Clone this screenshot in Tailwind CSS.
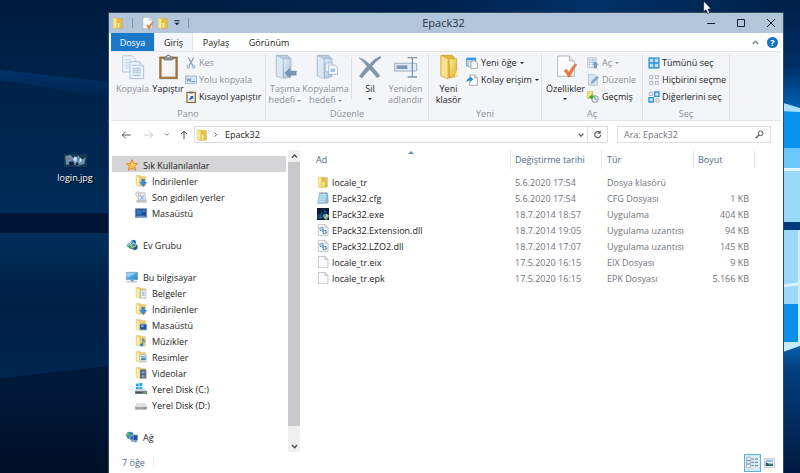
<!DOCTYPE html>
<html lang="tr">
<head>
<meta charset="utf-8">
<meta name="viewport" content="width=device-width, initial-scale=1">
<title>Epack32</title>
<script src="https://cdn.jsdelivr.net/npm/@tailwindcss/browser@4"></script>
</head>
<body class="relative flex h-screen flex-col overflow-hidden bg-[#001c40] pt-3 pr-4 pl-[108px] font-['Open_Sans','Noto_Sans',sans-serif] text-[9px] leading-[11px] text-[#1c1c20]">

<!-- Shared icons -->
<svg class="absolute size-0" aria-hidden="true">
  <defs>
    <linearGradient id="gold" x1="0" y1="0" x2="1" y2="1"><stop offset="0" stop-color="#fdeb90"/><stop offset="1" stop-color="#deb132"/></linearGradient>
    <linearGradient id="pale" x1="0" y1="0" x2="1" y2="1"><stop offset="0" stop-color="#e6eff8"/><stop offset="1" stop-color="#a9bfd5"/></linearGradient>
    <linearGradient id="sky" x1="0" y1="0" x2="1" y2="1"><stop offset="0" stop-color="#8fd6fb"/><stop offset="1" stop-color="#1b7fd0"/></linearGradient>
  </defs>
  <symbol id="folder" viewBox="0 0 36 36">
    <path d="M4 3h13l3 3v27l-8 2-8-3z" fill="url(#gold)" stroke="#d3ac45" stroke-width="1.5"/>
    <path d="M17 5h14v28l-12 1z" fill="#e6c14a" stroke="#cda239" stroke-width="1.5"/>
    <path d="M4 3l9 5v27l-9-4z" fill="#f9e98c"/><path d="M17 18h5v14h-5z" fill="#fff6bd"/>
  </symbol>
  <symbol id="navfolder" viewBox="0 0 36 36">
    <path d="M4 2h12l3 3h12v28H14l-10-3z" fill="#ebcb6c" stroke="#d3b052" stroke-width="1.5"/>
    <path d="M4 2l10 5v27L4 30z" fill="#faeda6" stroke="#e1c468"/>
  </symbol>
  <symbol id="down" viewBox="0 0 36 36"><use href="#navfolder"/><path d="M20 13h9v9h6L25 35 14 22h6z" fill="#2f8fe0" stroke="#1b68b3"/></symbol>
  <symbol id="docs" viewBox="0 0 36 36"><use href="#navfolder"/><path d="M16 9h17v24H16z" fill="#f1f5fa" stroke="#8c9aad" stroke-width="1.5"/><path d="M20 15h9M20 20h9M20 25h9" stroke="#7496bd" stroke-width="2"/></symbol>
  <symbol id="deskfolder" viewBox="0 0 36 36"><use href="#navfolder"/><path d="M15 16h20v16H15z" fill="#28549a" stroke="#6787b1" stroke-width="2"/><path d="M18 19h8v5h-8z" fill="#76b6ed"/></symbol>
  <symbol id="music" viewBox="0 0 36 36"><use href="#navfolder"/><path d="M22 7c1 7 11 7 9 19-1-6-3-8-6-9v12c-1 6-11 6-10 0 1-4 5-4 7-3z" fill="#258bd8"/></symbol>
  <symbol id="pics" viewBox="0 0 36 36"><use href="#navfolder"/><path d="M14 12h21v20H14z" fill="#eaf4fb" stroke="#a0b5c8" stroke-width="1.5"/><path d="M17 25l6-6 4 3 5-4v10H17z" fill="#4b8f99"/><path d="M17 15h15v4H17z" fill="#70b3e8"/></symbol>
  <symbol id="videos" viewBox="0 0 36 36"><use href="#navfolder"/><path d="M15 8h19v26H15z" fill="#444c56"/><path d="M20 11h9v9h-9zM20 23h9v9h-9z" fill="#68a3da"/><path d="M17 10v22M32 10v22" stroke="#e9edf0" stroke-width="2" stroke-dasharray="3 3"/></symbol>
  <symbol id="star" viewBox="0 0 36 36"><path d="M18 2l5 11 12 1-9 8 3 12-11-6-11 6 3-12-9-8 12-1z" fill="#ffbf43" stroke="#e07a22" stroke-width="2.5"/><path d="M18 8l3 8 7 1-9 4z" fill="#ffe69a"/></symbol>
  <symbol id="recent" viewBox="0 0 36 36"><path d="M11 5h19l2 25H9z" fill="#e5e9ed" stroke="#9da6b0" stroke-width="1.5"/><path d="M5 28h29v6H5z" fill="#c4cbd2" stroke="#8d969f"/><path d="M16 14l6 5 5-6M16 26l5-6 6 6" fill="none" stroke="#4f91cb" stroke-width="2.5"/><circle cx="9" cy="9" r="7" fill="#f6f7f8" stroke="#a2a9b1" stroke-width="2"/><path d="M9 5v5h4" fill="none" stroke="#6f7780" stroke-width="1.5"/></symbol>
  <symbol id="desktop" viewBox="0 0 36 36"><path d="M1 5h34v26H1z" fill="#1d4c93" stroke="#7a8ba1" stroke-width="2"/><path d="M4 9h16v13H4z" fill="#2f78c7"/><path d="M22 8h9v2h-9zM22 13h9v2h-9zM4 26h28v3H4z" fill="#83addd"/></symbol>
  <symbol id="homegroup" viewBox="0 0 36 36"><circle cx="9" cy="19" r="7" fill="#62b1e8"/><circle cx="22" cy="10" r="8" fill="#338fc9"/><circle cx="26" cy="24" r="9" fill="#2c65ad"/><circle cx="16" cy="22" r="8" fill="#48a34a"/><path d="M2 15c6 5 12 2 14-9M14 18l10-7 5 11-12 3z" stroke="#eaf7ee" stroke-width="2" fill="none"/><path d="M21 3l9 5-3 5zM24 27l10-5-4 9z" fill="#1d438c"/></symbol>
  <symbol id="pc" viewBox="0 0 36 36"><path d="M1 4h34v22H1z" fill="url(#sky)" stroke="#7697b3" stroke-width="2"/><path d="M4 7h26L4 19z" fill="#b4e8ff" opacity=".6"/><path d="M14 27h9v4h-9z" fill="#8596a7"/><path d="M2 31h32v3H2z" fill="#9fb6ca"/></symbol>
  <symbol id="diskc" viewBox="0 0 36 36"><path d="M3 2l8-1v8H3zM13 1l9-1v9h-9zM3 11h8v7H3zM13 11h9v8h-9z" fill="#21a4e8"/><path d="M4 19h28l4 6H0z" fill="#ccd2d6"/><path d="M0 24h36v9H0z" fill="#6f7d85"/><path d="M3 27h19v3H3z" fill="#444f57"/><path d="M27 26h6v4h-6z" fill="#59c94d"/></symbol>
  <symbol id="diskd" viewBox="0 0 36 36"><path d="M5 14h26l5 10v5q0 3-3 3H3q-3 0-3-3v-5z" fill="#dfe1e3" stroke="#a5a8ab"/><path d="M1 24h34v5q0 2-2 2H3q-2 0-2-2z" fill="#8b8f93"/><path d="M5 26h21v2H5z" fill="#d4d6d8"/></symbol>
  <symbol id="network" viewBox="0 0 36 36"><circle cx="12" cy="13" r="11" fill="#2e83d0"/><path d="M4 6c7-4 10 0 7 5s-7 3-8 8c-3-5-2-9 1-13zM13 15l7-3v8l-6 3z" fill="#59b851"/><path d="M12 14h15v13H12z" fill="#2d69b7" stroke="#b9cbdf" stroke-width="2"/><path d="M22 12h13v16H22z" fill="#274d99" stroke="#8da8ca" stroke-width="2"/><path d="M25 29h7v5h-7zM16 28h6v4h-6z" fill="#5a79a3"/></symbol>
  <symbol id="cfg" viewBox="0 0 36 36"><path d="M8 3h24l2 28-4 3H2z" fill="#86bddb" stroke="#7195ae" stroke-width="1.5"/><path d="M9 5h19l-4 26H4z" fill="#c5e8f5"/><path d="M9 10h18M8 15h18M7 20h18M6 25h18" stroke="#73aecd" stroke-width="1.5"/><path d="M8 3h23" stroke="#5f6f7b" stroke-width="3" stroke-dasharray="2 2"/></symbol>
  <symbol id="exe" viewBox="0 0 36 36"><path d="M0 0h36v36H0z" fill="#0b1d35"/><path d="M0 24l5-10 4 7 5-14 3 12 8-16 4 14v11H0z" fill="#123d68"/><path d="M3 29h14M8 22l4 3M22 8l4 4" stroke="#3ea2d8" stroke-width="2"/><path d="M27 18l8 3c0 7-3 11-8 14-5-3-8-7-8-14z" fill="#eed04c"/><path d="M27 18v8h-8c0-2 0-3 0-5zM27 26h8c-1 4-4 7-8 9z" fill="#4b93dc"/></symbol>
  <symbol id="page" viewBox="0 0 36 36"><path d="M4 1h20l9 9v25H4z" fill="#fcfcfc" stroke="#a7a9ac" stroke-width="2"/><path d="M24 1v9h9" fill="#e6e7e8" stroke="#a7a9ac" stroke-width="2"/></symbol>
  <symbol id="dll" viewBox="0 0 36 36"><use href="#page"/><circle cx="14" cy="15" r="5" fill="#d6eafb" stroke="#4a84bd" stroke-width="4" stroke-dasharray="3 1.5"/><circle cx="23" cy="24" r="5" fill="#d6eafb" stroke="#3a6fa5" stroke-width="4" stroke-dasharray="3 1.5"/></symbol>
  <symbol id="props" viewBox="0 0 72 72"><path d="M11 3h35l15 15v46H11z" fill="#fdfdfe" stroke="#a3a7af" stroke-width="2.5"/><path d="M46 3v15h15" fill="#e4e7eb" stroke="#a3a7af" stroke-width="2.5"/><path d="M29 48l8-6 8 9c5-10 10-18 20-25l4 4C59 41 54 51 49 66h-6c-4-8-8-13-14-18z" fill="#ea7b49" stroke="#c9602f"/></symbol>
  <symbol id="bigfolder" viewBox="0 0 72 78"><path d="M12 4h34l5 6v54l-12 8-27-6z" fill="#e3b936" stroke="#bd922b" stroke-width="2"/><path d="M36 14h23v53l-21 4z" fill="url(#gold)" stroke="#c7992d" stroke-width="2"/><path d="M12 4l21 11v60L12 66z" fill="#fae38b" stroke="#d0a63c" stroke-width="2"/><path d="M59 50l6 6-4 10-8 2z" fill="#fff0a5"/></symbol>
  <symbol id="greyfolder" viewBox="0 0 72 78"><path d="M10 4h34l6 6v54l-12 8-28-6z" fill="#b7cadd" stroke="#93a9bf" stroke-width="2"/><path d="M30 14h24v54l-22 5z" fill="url(#pale)" stroke="#9ab0c5" stroke-width="2"/><path d="M10 4l20 11v59L10 66z" fill="#dce8f3" stroke="#a7bacd" stroke-width="2"/></symbol>
  <symbol id="caret" viewBox="0 0 12 6"><path d="M0 0h12L6 6z" fill="currentColor"/></symbol>
</svg>

<!-- Desktop wallpaper -->
<svg class="absolute inset-0 h-full w-full" viewBox="0 0 800 473" preserveAspectRatio="none" aria-hidden="true">
  <defs>
    <linearGradient id="wl" x1="0" y1="0" x2="0" y2="1"><stop offset="0" stop-color="#001b3e"/><stop offset=".2" stop-color="#00234c"/><stop offset=".45" stop-color="#002a58"/><stop offset="1" stop-color="#002a58"/></linearGradient>
    <linearGradient id="ws" x1="0" y1="0" x2="0" y2="1"><stop offset="0" stop-color="#003c78" stop-opacity=".7"/><stop offset="1" stop-color="#003c78" stop-opacity="0"/></linearGradient>
    <linearGradient id="wm" x1="0" y1="0" x2="0" y2="1"><stop offset="0" stop-color="#002e5c"/><stop offset=".5" stop-color="#001f45"/><stop offset="1" stop-color="#002650"/></linearGradient>
    <linearGradient id="wb" x1="0" y1="0" x2="0" y2="1"><stop offset="0" stop-color="#001a3b"/><stop offset="1" stop-color="#001028"/></linearGradient>
    <linearGradient id="wt" x1="0" y1="0" x2="1" y2="0"><stop offset="0" stop-color="#001b3e"/><stop offset=".5" stop-color="#002352"/><stop offset=".7" stop-color="#003266"/><stop offset="1" stop-color="#001f49"/></linearGradient>
    <linearGradient id="wr" x1="0" y1="0" x2="0" y2="1"><stop offset="0" stop-color="#001f49"/><stop offset=".6" stop-color="#002f66"/><stop offset="1" stop-color="#0068bd"/></linearGradient>
    <linearGradient id="wd" x1="0" y1="0" x2="0" y2="1"><stop offset="0" stop-color="#0a66b4"/><stop offset=".2" stop-color="#033f80"/><stop offset="1" stop-color="#001a41"/></linearGradient>
  </defs>
  <path d="M0 0h800v473H0z" fill="url(#wl)"/>
  <path d="M0 70l108 12v16L0 80z" fill="url(#ws)"/>
  <path d="M0 213h108v20H0z" fill="#001535"/>
  <path d="M0 233h108v145H0z" fill="url(#wm)"/>
  <path d="M0 378l108-12v107H0z" fill="url(#wb)"/>
  <path d="M108 0h692v14H108z" fill="url(#wt)"/>
  <path d="M780 0h20v112h-20z" fill="url(#wr)"/>
  <path d="M780 108h20v40h-20z" fill="#0794ef"/>
  <path d="M780 102l20 6v4l-20-1z" fill="#a9e0ff"/>
  <path d="M780 148h20v75h-20z" fill="#6ac7f9"/>
  <path d="M780 169h20v54h-20z" fill="#9bd9fb"/>
  <path d="M780 168h20v3h-20z" fill="#e4f7ff"/>
  <path d="M780 222h20v8h-20z" fill="#003a7c"/>
  <path d="M780 230h20v74h-20z" fill="#9bd9fb"/>
  <path d="M780 285l20-3v3l-20 3z" fill="#d9f3ff"/>
  <path d="M780 304h20v38h-20z" fill="#0a8fea"/>
  <path d="M798 230h2v115h-2z" fill="#d0eeff"/>
  <path d="M780 342h20v131h-20z" fill="url(#wd)"/>
  <path d="M780 342h20v4l-20 7z" fill="#c5ebff"/>
</svg>

<!-- Desktop file -->
<a href="#" class="absolute top-[154px] left-[50px] flex w-[50px] flex-col items-center gap-[5px] text-white [text-shadow:1px_1px_1px_#000]">
  <svg class="h-[13px] w-[23px]" viewBox="0 0 69 39"><path d="M0 0h69v39H0z" fill="#19374f"/><path d="M4 6l16-3 8 9 16-7 8 13 13-8-4 20-20 5-17-6-18 3z" fill="#6492ae"/><path d="M8 8l11 5-4 9z" fill="#b3664f"/><path d="M32 7l7 4-3 13-9-7zM48 10l7 8-9 10z" fill="#cbe4f0"/><path d="M14 25l12-3 5 8-13 3zM40 24l5 9H34z" fill="#0a1c2d"/></svg>
  <span>login.jpg</span>
</a>

<main class="relative flex min-h-0 flex-1 flex-col border-x border-t border-[#33475d] bg-white">
  <!-- Title bar -->
  <header class="flex h-5 shrink-0 items-center bg-[#b2c6db]">
    <div class="flex flex-1 items-center pl-[3px]">
      <svg class="size-3"><use href="#folder"/></svg>
      <span class="mx-[8px] h-2.5 w-px bg-[#8093a8]"></span>
      <button aria-label="Özellikler"><svg class="size-[13px]"><use href="#props"/></svg></button>
      <button class="ml-[3px]" aria-label="Yeni klasör"><svg class="size-3"><use href="#folder"/></svg></button>
      <button class="ml-[5px]" aria-label="Hızlı erişim araç çubuğunu özelleştir"><svg class="size-[6px]" viewBox="0 0 18 18"><path d="M1 1h16v3H1zM1 8h16l-8 8z" fill="#17202b"/></svg></button>
      <span class="ml-[8px] h-2.5 w-px bg-[#8093a8]"></span>
    </div>
    <h1 class="pr-2 text-[11px] leading-4 text-[#26323f]">Epack32</h1>
    <div class="flex flex-1 justify-end text-[#17202b]">
      <button class="flex w-6 justify-center" aria-label="Simge durumuna küçült"><svg class="size-[10px]" viewBox="0 0 10 10"><path d="M1 5.5h8" stroke="currentColor"/></svg></button>
      <button class="flex w-9 justify-center" aria-label="Ekranı kapla"><svg class="size-[10px]" viewBox="0 0 10 10"><path d="M1.5 1.5h7v7h-7z" fill="none" stroke="currentColor"/></svg></button>
      <button class="flex w-6 justify-center" aria-label="Kapat"><svg class="size-[10px]" viewBox="0 0 10 10"><path d="M1 1l8 8M9 1L1 9" stroke="currentColor"/></svg></button>
    </div>
  </header>

  <!-- Ribbon tabs -->
  <nav class="flex h-[18px] shrink-0 items-stretch pl-[2px]" aria-label="Şerit">
    <button class="w-[43px] bg-[#1979ca] text-white">Dosya</button>
    <button class="w-[39px] border-x border-[#e3e5ea] bg-[#f4f5f9]">Giriş</button>
    <button class="w-[46px]">Paylaş</button>
    <button class="w-[60px]">Görünüm</button>
    <div class="ml-auto flex items-center gap-[8px] pr-[5px]">
      <button aria-label="Şeridi küçült"><svg class="size-[7px]" viewBox="0 0 21 21"><path d="M2 15l8-8 9 8" fill="none" stroke="#777c83" stroke-width="4"/></svg></button>
      <button aria-label="Yardım" class="flex size-[11px] items-center justify-center rounded-full bg-[#1474c4] font-bold text-white">?</button>
    </div>
  </nav>

  <!-- Ribbon -->
  <div class="mx-[2px] flex h-[70px] shrink-0 border-y border-[#e3e5ea] bg-[#f4f5f9] pt-[2px]">
    <section class="flex w-[155px] flex-col border-r border-[#e0e2e8]">
      <div class="flex h-[54px] pl-[2px]">
        <button class="flex w-[39px] flex-col items-center gap-[3px] text-[#8d929b]">
          <svg class="h-[26px] w-6" viewBox="0 0 72 78"><path d="M5 5h28l11 11v38H5z" fill="#eaf2fa" stroke="#abc3dc" stroke-width="2.5"/><path d="M12 18h18M12 26h14M12 34h14M12 42h14" stroke="#c0d2e5" stroke-width="3"/><path d="M27 23h28l13 13v38H27z" fill="#edf4fb" stroke="#9db9d6" stroke-width="2.5"/><path d="M55 23v13h13" fill="#d8e5f1" stroke="#9db9d6" stroke-width="2"/><path d="M34 34h16M34 64h25" stroke="#9db9d6" stroke-width="3"/><path d="M35 41h24v17H35z" fill="#b3cae1"/><path d="M35 47h24M35 52h24M44 41v17" stroke="#e3edf6" stroke-width="2"/></svg>
          Kopyala</button>
        <button class="flex w-[32px] flex-col items-center gap-[3px]">
          <svg class="h-[26px] w-6" viewBox="0 0 72 78"><path d="M11 9h53v65H11z" fill="#a7763c" stroke="#885a28" stroke-width="2"/><path d="M17 15h41v53H17z" fill="#f3f4f7" stroke="#cfc5ba"/><path d="M25 9h5q1-6 7-6t7 6h6v9H25z" fill="#8d949c" stroke="#626971" stroke-width="2"/><path d="M34 8h7" stroke="#f4f5f6" stroke-width="3"/></svg>
          Yapıştır</button>
        <div class="flex flex-col pl-[1px]">
          <button class="flex h-[17px] items-center gap-[2px] text-[#8d929b]"><svg class="size-3" viewBox="0 0 36 36"><path d="M10 2l13 23M26 2L13 25" stroke="#8ea5bb" stroke-width="4"/><circle cx="10" cy="29" r="4" fill="none" stroke="#7fa3c5" stroke-width="3"/><circle cx="26" cy="29" r="4" fill="none" stroke="#7fa3c5" stroke-width="3"/></svg>Kes</button>
          <button class="flex h-[17px] items-center gap-[2px] text-[#8d929b]"><svg class="size-3" viewBox="0 0 36 36"><path d="M1 6h34v23H1z" fill="#d8e6f5" stroke="#7f9fc1" stroke-width="2"/><path d="M5 13l3 9 4-8 3 8 3-9M19 23h12" fill="none" stroke="#5e87b1" stroke-width="2.5"/></svg>Yolu kopyala</button>
          <button class="flex h-[17px] items-center gap-[2px]"><svg class="size-3" viewBox="0 0 36 36"><path d="M6 4h25v30H6z" fill="#fff" stroke="#9a6a35" stroke-width="4"/><path d="M12 2h12v6H12z" fill="#69727b"/><path d="M10 13h17v17H10z" fill="#fff" stroke="#bdc5cc"/><path d="M15 15h10v10l-3-3-6 6-4-4 6-6z" fill="#1d5eaa"/></svg>Kısayol yapıştır</button>
        </div>
      </div>
      <p class="text-center text-[#8b9099]">Pano</p>
    </section>

    <section class="flex w-[163px] flex-col border-r border-[#e0e2e8]">
      <div class="flex h-[54px] pl-[1px] text-[#8d929b]">
        <button class="flex w-[36px] flex-col items-center gap-[3px]">
          <svg class="h-[26px] w-6" viewBox="0 0 72 78"><use href="#greyfolder"/><path d="M35 57l16-15v9h19v13H51v9z" fill="#7897b4" stroke="#6885a1"/></svg>
          <span>Taşıma<br>hedefi <svg class="inline h-[2px] w-1"><use href="#caret"/></svg></span></button>
        <button class="flex w-[45px] flex-col items-center gap-[3px]">
          <svg class="h-[26px] w-6" viewBox="0 0 72 78"><use href="#greyfolder"/><path d="M35 27h17l7 7v19H35z" fill="#edf4fa" stroke="#96aec5" stroke-width="2"/><path d="M44 33h19l8 8v20H44z" fill="#f3f7fb" stroke="#8ea8c1" stroke-width="2"/><path d="M50 44h13v10H50z" fill="#a3bdd6"/></svg>
          <span>Kopyalama<br>hedefi <svg class="inline h-[2px] w-1"><use href="#caret"/></svg></span></button>
        <span class="mx-[3px] mt-[3px] h-[42px] w-px bg-[#dcdfe5]"></span>
        <button class="flex w-[30px] flex-col items-center gap-[3px] text-[#26262a]">
          <svg class="h-[26px] w-6" viewBox="0 0 72 78"><path d="M3 11q16 3 32 20Q47 15 67 7l2 4Q53 21 42 37q13 15 24 29l-8 6Q46 58 35 46 22 60 12 72l-8-5q12-17 23-30Q17 23 3 11z" fill="#8197ad" stroke="#71879c"/></svg>
          <span class="flex flex-col items-center gap-[4px]">Sil<svg class="h-[2px] w-1"><use href="#caret"/></svg></span></button>
        <button class="flex w-[41px] flex-col items-center gap-[3px]">
          <svg class="h-[26px] w-6" viewBox="0 0 72 78"><path d="M2 28h66v23H2z" fill="#e1eaf3" stroke="#9cb1c5" stroke-width="3"/><path d="M8 34h32v11H8z" fill="#7d99b4"/><path d="M41 11h10q4 0 4 4v50q0 4-4 4H41M69 11H59q-4 0-4 4v50q0 4 4 4h10" fill="none" stroke="#7f96ac" stroke-width="4"/></svg>
          <span>Yeniden<br>adlandır</span></button>
      </div>
      <p class="text-center text-[#8b9099]">Düzenle</p>
    </section>

    <section class="flex w-[113px] flex-col border-r border-[#e0e2e8]">
      <div class="flex h-[54px] pl-[2px]">
        <button class="flex w-[35px] flex-col items-center gap-[3px]">
          <svg class="h-[26px] w-6"><use href="#bigfolder"/></svg><span>Yeni<br>klasör</span></button>
        <div class="flex flex-col">
          <button class="flex h-[17px] items-center gap-[3px]"><svg class="size-3" viewBox="0 0 36 36"><path d="M2 3h27v24H2z" fill="#bfe0f6" stroke="#3d93cf" stroke-width="2.5"/><path d="M2 3h27v6H2z" fill="#3b9ada"/><path d="M7 13h18v17H7z" fill="#dfe9f0" stroke="#79899a"/><path d="M15 12h13l6 6v17H15z" fill="#f5f7f9" stroke="#7b8490" stroke-width="2"/></svg>Yeni öğe <svg class="h-[2px] w-1"><use href="#caret"/></svg></button>
          <button class="flex h-[17px] items-center gap-[3px]"><svg class="size-3" viewBox="0 0 36 36"><path d="M11 3h15l8 8v23H11z" fill="#fafbfc" stroke="#858d98" stroke-width="2"/><path d="M26 3v8h8" fill="none" stroke="#858d98" stroke-width="2"/><path d="M1 25q2-13 11-13V7l10 9-10 8v-5Q6 19 1 25z" fill="#2c86d4"/></svg>Kolay erişim <svg class="h-[2px] w-1"><use href="#caret"/></svg></button>
        </div>
      </div>
      <p class="text-center text-[#8b9099]">Yeni</p>
    </section>

    <section class="flex w-[101px] flex-col border-r border-[#e0e2e8]">
      <div class="flex h-[54px] pl-[2px]">
        <button class="flex w-[43px] flex-col items-center gap-[3px]">
          <svg class="h-[26px] w-6"><use href="#props"/></svg>
          <span class="flex flex-col items-center gap-[4px]">Özellikler<svg class="h-[2px] w-1"><use href="#caret"/></svg></span></button>
        <div class="flex flex-col">
          <button class="flex h-[17px] items-center gap-[3px] text-[#8d929b]"><svg class="size-3" viewBox="0 0 36 36"><path d="M2 2h25v30H2z" fill="#e5eef7" stroke="#9cb4cc" stroke-width="2"/><path d="M6 9h4M13 9h10M6 16h4M13 16h10M6 23h4" stroke="#8da9c5" stroke-width="3"/><path d="M25 13l10 10h-5v11H20V23h-5z" fill="#7f9cb9"/></svg>Aç <svg class="h-[2px] w-1"><use href="#caret"/></svg></button>
          <button class="flex h-[17px] items-center gap-[3px] text-[#8d929b]"><svg class="size-3" viewBox="0 0 36 36"><path d="M4 2h19l8 8v24H4z" fill="#dbe8f4" stroke="#9ab3cc" stroke-width="2"/><path d="M12 29l2-8L30 6l5 5-16 16z" fill="#8fabc6" stroke="#6d8eb0"/></svg>Düzenle</button>
          <button class="flex h-[17px] items-center gap-[3px]"><svg class="size-3" viewBox="0 0 36 36"><path d="M1 1h17v21H1z" fill="#f7df72" stroke="#c9a83c" stroke-width="1.5"/><circle cx="24" cy="24" r="10" fill="#eef3f6" stroke="#8b979f" stroke-width="3"/><path d="M24 17v8h6" fill="none" stroke="#4d6b86" stroke-width="2"/><path d="M5 19L17 9v6q6 0 8 5-4-2-8-1v6z" fill="#34a837"/></svg>Geçmiş</button>
        </div>
      </div>
      <p class="text-center text-[#8b9099]">Aç</p>
    </section>

    <section class="flex w-[87px] flex-col border-r border-[#e0e2e8]">
      <div class="flex h-[54px] flex-col pl-[5px]">
        <button class="flex h-[17px] items-center gap-[2px]"><svg class="size-3" viewBox="0 0 36 36"><path d="M1 1h34v34H1z" fill="#3c9fe2"/><path d="M5 5h11v11H5zM20 5h11v11H20zM5 20h11v11H5zM20 20h11v11H20z" fill="#c9e6fa" stroke="#2582c7"/></svg>Tümünü seç</button>
        <button class="flex h-[17px] items-center gap-[2px]"><svg class="size-3" viewBox="0 0 36 36"><path d="M5 5h9v9H5zM22 5h9v9h-9zM5 22h9v9H5zM22 22h9v9h-9z" fill="#fff" stroke="#a1a6ad" stroke-width="2.5"/></svg>Hiçbirini seçme</button>
        <button class="flex h-[17px] items-center gap-[2px]"><svg class="size-3" viewBox="0 0 36 36"><path d="M4 4h9v9H4zM24 24h9v9h-9z" fill="#fff" stroke="#a1a6ad" stroke-width="2.5"/><path d="M20 3h13v13H20zM3 20h13v13H3z" fill="#c9e6fa" stroke="#2f94dc" stroke-width="4"/></svg>Diğerlerini seç</button>
      </div>
      <p class="text-center text-[#8b9099]">Seç</p>
    </section>
  </div>

  <!-- Address bar -->
  <div class="flex h-[27px] shrink-0 items-center pr-[12px] pl-[12px]">
    <button aria-label="Geri"><svg class="size-[10px]" viewBox="0 0 30 30"><path d="M14 5L4 15l10 10M4 15h25" fill="none" stroke="#555b62" stroke-width="3"/></svg></button>
    <button class="ml-[13px]" aria-label="İleri"><svg class="size-[10px]" viewBox="0 0 30 30"><path d="M16 5l10 10-10 10M26 15H1" fill="none" stroke="#c9ccd0" stroke-width="3"/></svg></button>
    <button class="ml-[10px]" aria-label="Son konumlar"><svg class="size-[5px]" viewBox="0 0 15 15"><path d="M2 4l6 6 6-6" fill="none" stroke="#777c83" stroke-width="3"/></svg></button>
    <button class="ml-[10px]" aria-label="Yukarı"><svg class="size-[10px]" viewBox="0 0 30 30"><path d="M6 12l9-9 9 9M15 3v25" fill="none" stroke="#555b62" stroke-width="3"/></svg></button>
    <div class="ml-[5px] flex h-[17px] flex-1 items-center border border-[#dcdee1] pl-[1px]">
      <svg class="size-3"><use href="#folder"/></svg>
      <svg class="ml-[5px] size-[5px]" viewBox="0 0 15 15"><path d="M5 2l6 6-6 6" fill="none" stroke="#555b62" stroke-width="3"/></svg>
      <span class="ml-[7px] flex-1">Epack32</span>
      <button class="flex w-[13px] justify-center" aria-label="Önceki konumlar"><svg class="size-[6px]" viewBox="0 0 18 18"><path d="M2 5l7 8 7-8" fill="none" stroke="#555b62" stroke-width="4"/></svg></button>
      <button class="flex h-full w-5 items-center justify-center border-l border-[#dcdee1]" aria-label="Yenile"><svg class="size-[9px]" viewBox="0 0 27 27"><path d="M21 8a9 9 0 1 0 2 7" fill="none" stroke="#555b62" stroke-width="3.5"/><path d="M23 1v10H13z" fill="#555b62"/></svg></button>
    </div>
    <div class="ml-[9px] flex h-[17px] w-[154px] items-center border border-[#dcdee1] px-[6px]">
      <input type="search" aria-label="Ara: Epack32" placeholder="Ara: Epack32" class="min-w-0 flex-1 outline-none placeholder:text-[#70757c]">
      <svg class="size-[9px]" viewBox="0 0 27 27"><circle cx="17" cy="10" r="7" fill="none" stroke="#555b62" stroke-width="3"/><path d="M12 15L2 25" stroke="#555b62" stroke-width="4"/></svg>
    </div>
  </div>

  <div class="flex min-h-0 flex-1 pt-[2px]">
    <!-- Navigation pane -->
    <nav class="w-[177px] shrink-0 overflow-hidden pt-[6px] pl-[3px]" aria-label="Klasörler">
      <ul class="[&_a]:flex [&_a]:h-4 [&_a]:items-center [&_a]:gap-[5px] [&_a]:pt-[2px] [&_a]:pl-[23px] [&_svg]:size-3">
        <li><a href="#" class="bg-[#d5d5d7] !pl-[14px]"><svg><use href="#star"/></svg>Sık Kullanılanlar</a></li>
        <li><a href="#"><svg><use href="#down"/></svg>İndirilenler</a></li>
        <li><a href="#"><svg><use href="#recent"/></svg>Son gidilen yerler</a></li>
        <li><a href="#"><svg><use href="#desktop"/></svg>Masaüstü</a></li>
        <li class="mt-4"><a href="#" class="!pl-[14px]"><svg><use href="#homegroup"/></svg>Ev Grubu</a></li>
        <li class="mt-4"><a href="#" class="!pl-[14px]"><svg><use href="#pc"/></svg>Bu bilgisayar</a></li>
        <li><a href="#"><svg><use href="#docs"/></svg>Belgeler</a></li>
        <li><a href="#"><svg><use href="#down"/></svg>İndirilenler</a></li>
        <li><a href="#"><svg><use href="#deskfolder"/></svg>Masaüstü</a></li>
        <li><a href="#"><svg><use href="#music"/></svg>Müzikler</a></li>
        <li><a href="#"><svg><use href="#pics"/></svg>Resimler</a></li>
        <li><a href="#"><svg><use href="#videos"/></svg>Videolar</a></li>
        <li><a href="#"><svg><use href="#diskc"/></svg>Yerel Disk (C:)</a></li>
        <li><a href="#"><svg><use href="#diskd"/></svg>Yerel Disk (D:)</a></li>
        <li class="mt-4"><a href="#" class="!pl-[14px]"><svg><use href="#network"/></svg>Ağ</a></li>
      </ul>
    </nav>
    <div class="mr-px ml-[2px] flex w-3 shrink-0 flex-col bg-[#f0f0f1]">
      <button class="flex h-3 shrink-0 items-center justify-center" aria-label="Yukarı kaydır"><svg class="size-[7px]" viewBox="0 0 21 21"><path d="M3 14l8-8 7 8" fill="none" stroke="#484c52" stroke-width="4"/></svg></button>
      <div class="flex-1"><div class="h-[95%] bg-[#c9c9cb]"></div></div>
      <button class="flex h-3 shrink-0 items-center justify-center" aria-label="Aşağı kaydır"><svg class="size-[7px]" viewBox="0 0 21 21"><path d="M3 6l8 8 7-8" fill="none" stroke="#484c52" stroke-width="4"/></svg></button>
    </div>

    <!-- File list -->
    <div class="relative min-w-0 flex-1">
      <svg class="absolute top-[1px] left-[107px] h-[3px] w-[6px]" viewBox="0 0 18 9"><path d="M0 9l9-9 9 9z" fill="#5d8fb5"/></svg>
      <table class="w-full table-fixed border-separate border-spacing-0 text-left text-[#70747c]">
        <colgroup><col class="w-[210px]"><col class="w-[91px]"><col class="w-[92px]"><col class="w-[61px]"><col></colgroup>
        <thead class="text-[#4f6785] [&_th]:h-[24px] [&_th]:p-0 [&_th]:align-top [&_th]:font-normal">
          <tr>
            <th scope="col"><div class="border-r border-[#e2ebf4] py-[4px] pl-[15px]">Ad</div></th>
            <th scope="col"><div class="border-r border-[#e2ebf4] py-[4px] pl-[4px]">Değiştirme tarihi</div></th>
            <th scope="col"><div class="border-r border-[#e2ebf4] py-[4px] pl-[5px]">Tür</div></th>
            <th scope="col"><div class="border-r border-[#e2ebf4] py-[4px] pl-[4px]">Boyut</div></th>
            <td></td>
          </tr>
        </thead>
        <tbody class="[&_svg]:size-3 [&_td]:h-4 [&_td]:p-0 [&_td:nth-child(2)]:pl-[4px] [&_td:nth-child(3)]:pl-[5px] [&_td:nth-child(4)]:pr-[6px] [&_td:nth-child(4)]:text-right [&_a]:flex [&_a]:items-center [&_a]:gap-[3px] [&_a]:pl-[16px] [&_a]:text-[#1c1c20]">
          <tr><td><a href="#"><svg><use href="#folder"/></svg>locale_tr</a></td><td>5.6.2020 17:54</td><td>Dosya klasörü</td><td></td></tr>
          <tr><td><a href="#"><svg><use href="#cfg"/></svg>EPack32.cfg</a></td><td>5.6.2020 17:54</td><td>CFG Dosyası</td><td>1 KB</td></tr>
          <tr><td><a href="#"><svg><use href="#exe"/></svg>EPack32.exe</a></td><td>18.7.2014 18:57</td><td>Uygulama</td><td>404 KB</td></tr>
          <tr><td><a href="#"><svg><use href="#dll"/></svg>EPack32.Extension.dll</a></td><td>18.7.2014 19:05</td><td>Uygulama uzantısı</td><td>94 KB</td></tr>
          <tr><td><a href="#"><svg><use href="#dll"/></svg>EPack32.LZO2.dll</a></td><td>18.7.2014 17:07</td><td>Uygulama uzantısı</td><td>145 KB</td></tr>
          <tr><td><a href="#"><svg><use href="#page"/></svg>locale_tr.eix</a></td><td>17.5.2020 16:15</td><td>EIX Dosyası</td><td>9 KB</td></tr>
          <tr><td><a href="#"><svg><use href="#page"/></svg>locale_tr.epk</a></td><td>17.5.2020 16:15</td><td>EPK Dosyası</td><td>5.166 KB</td></tr>
        </tbody>
      </table>
    </div>
  </div>

  <!-- Status bar -->
  <footer class="flex h-[21px] shrink-0 items-center pr-[8px] pl-[13px] text-[#4f6785]">
    <span class="border-r border-[#eceef1] pr-[8px]">7 öğe</span>
    <button class="ml-auto flex h-[18px] w-[17px] items-center justify-center border border-[#5fb0dc] bg-[#d3ebf8]" aria-label="Ayrıntılar"><svg class="size-[13px]" viewBox="0 0 39 39"><path d="M2 4h11v31H2z" fill="#eef3f7" stroke="#8d9dab" stroke-width="2"/><path d="M2 14h11M2 24h11M16 9h8M27 9h9M16 19h8M27 19h9M16 29h8M27 29h9" stroke="#71818f" stroke-width="3"/></svg></button>
    <button class="ml-[3px]" aria-label="Büyük simgeler"><svg class="h-[10px] w-[11px]" viewBox="0 0 33 30"><path d="M1 1h31v28H1z" fill="#f3f5f8" stroke="#a5aeb8" stroke-width="2"/><path d="M5 5h22v7H5z" fill="#8fc0e8"/><path d="M5 12l9 5h13v7H5z" fill="#235468"/><path d="M14 17h12v4H14z" fill="#3f9270"/></svg></button>
  </footer>
</main>

<!-- Mouse pointer -->
<svg class="absolute top-0 left-[703px] h-[15px] w-[10px]" viewBox="0 0 30 45" aria-hidden="true"><path d="M2 3v32l7-6 5 12 6-3-5-11h10z" fill="#fff" stroke="#111" stroke-width="2"/></svg>
</body>
</html>
